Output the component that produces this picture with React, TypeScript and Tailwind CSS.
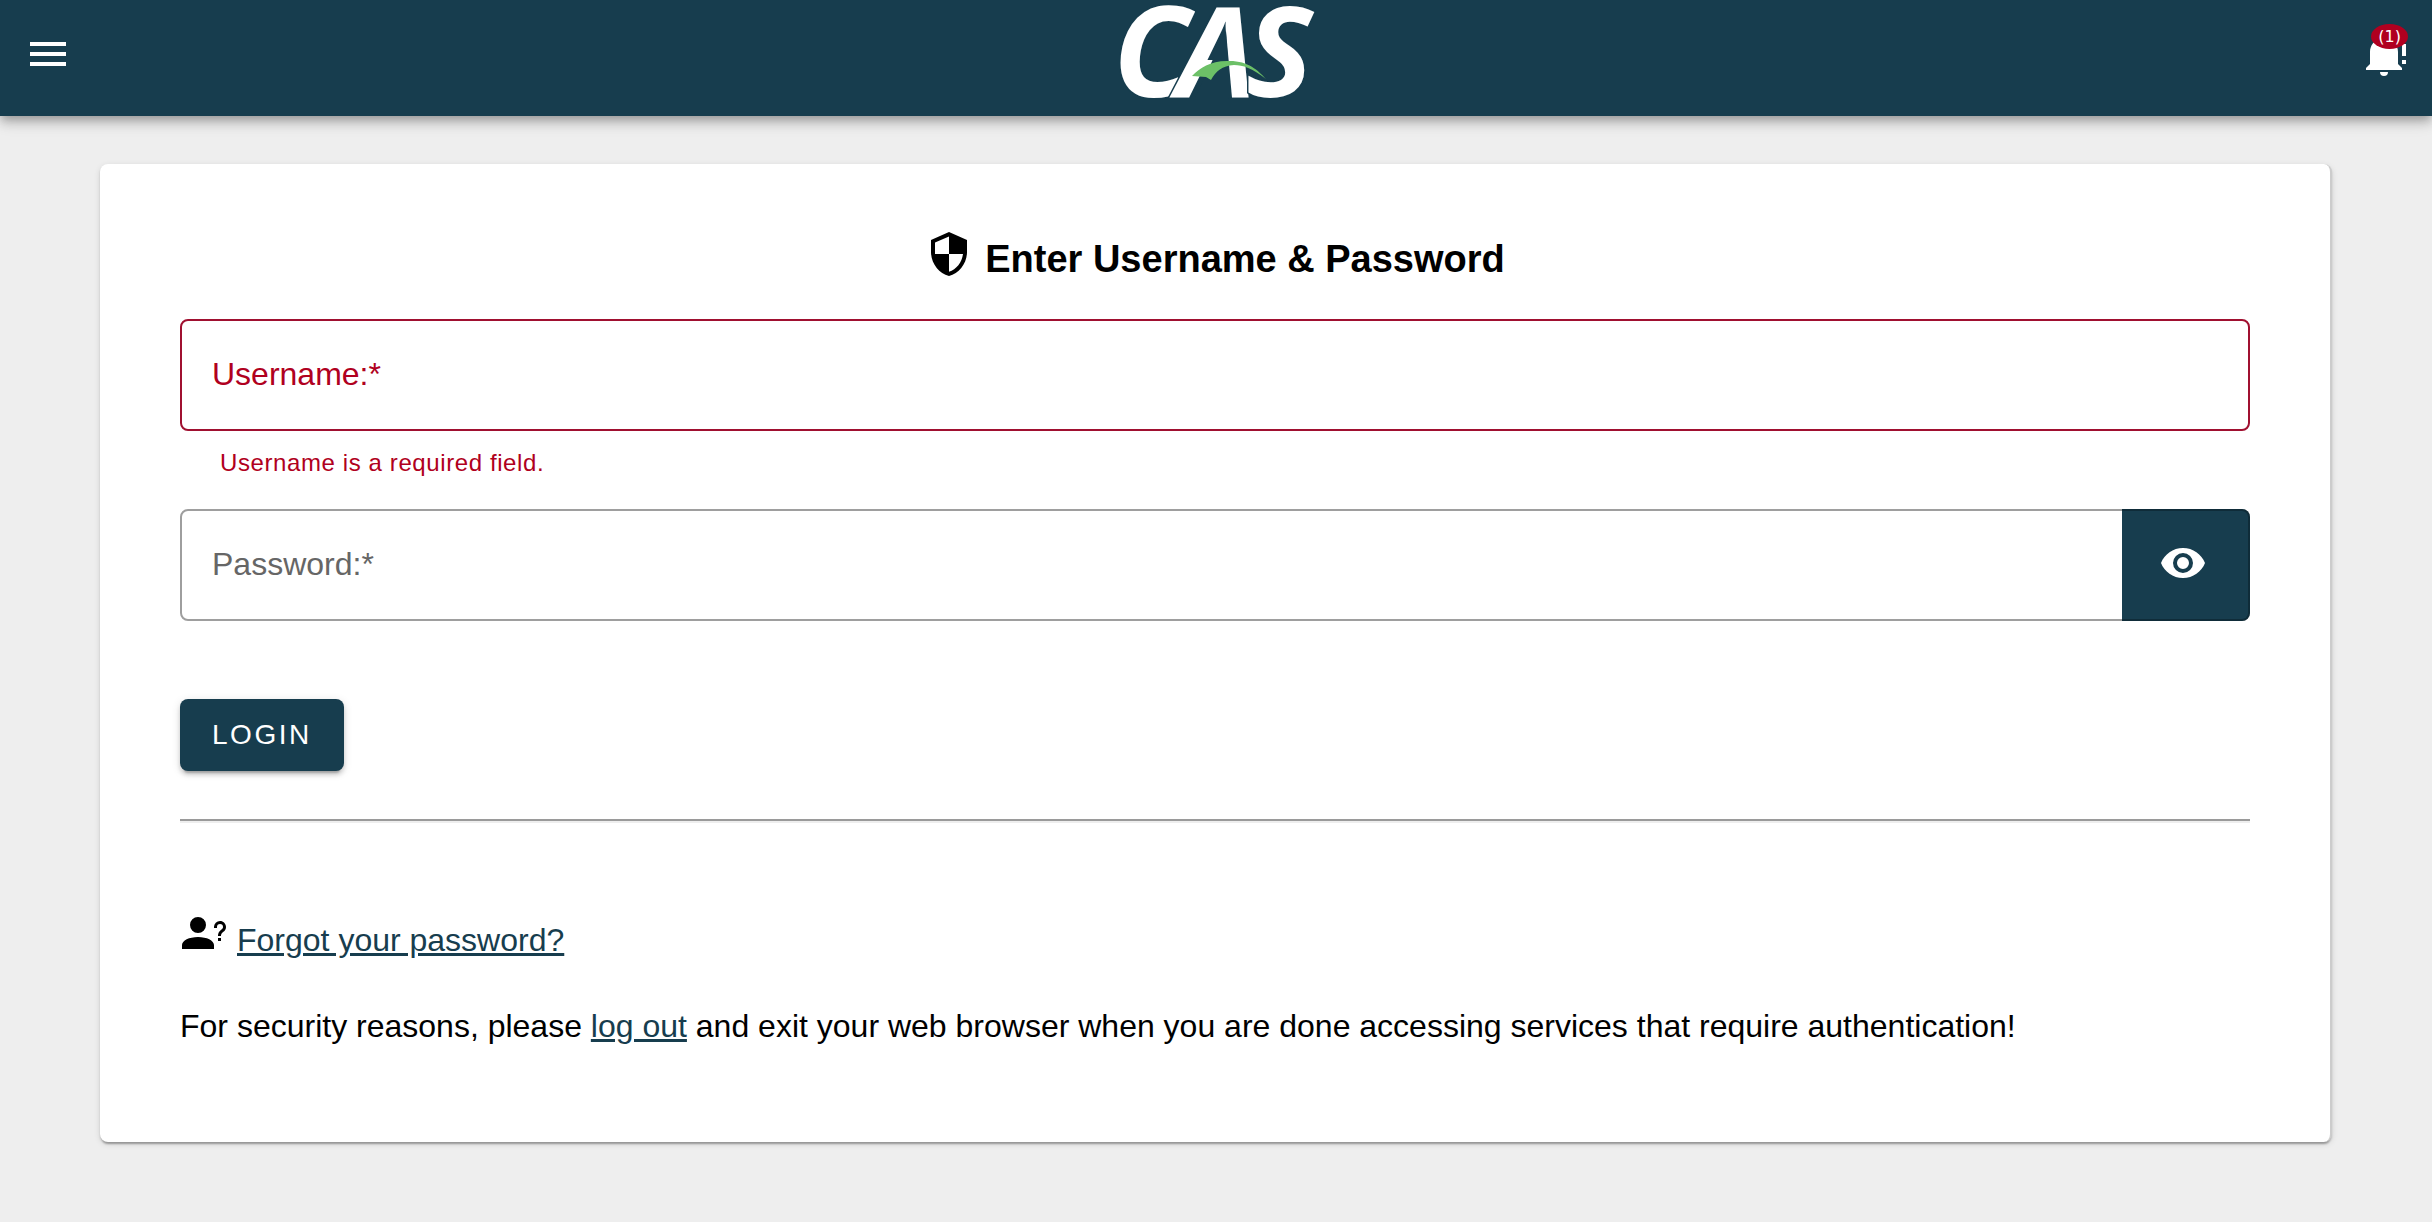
import { useState } from "react";
import type { ReactNode } from "react";

function Icon({ path, className }: { path: string; className?: string }) {
  return (
    <svg viewBox="0 0 24 24" aria-hidden="true" className={`size-12 shrink-0 fill-current ${className ?? ""}`}>
      <path d={path} />
    </svg>
  );
}

const icons = {
  menu: "M3,6H21V8H3V6M3,11H21V13H3V11M3,16H21V18H3V16Z",
  bell: "M23,7V13H21V7M21,15H23V17H21M12,2A2,2 0 0,0 10,4A2,2 0 0,0 10,4.29C7.12,5.14 5,7.82 5,11V17L3,19V20H21V19L19,17V11C19,7.82 16.88,5.14 14,4.29A2,2 0 0,0 14,4A2,2 0 0,0 12,2M10,21A2,2 0 0,0 12,23A2,2 0 0,0 14,21H10Z",
  shield:
    "M12,12H19C18.47,16.11 15.72,19.78 12,20.92V12H5V6.3L12,3.19M12,1L3,5V11C3,16.55 6.84,21.73 12,23C17.16,21.73 21,16.55 21,11V5L12,1Z",
  eye: "M12,9A3,3 0 0,0 9,12A3,3 0 0,0 12,15A3,3 0 0,0 15,12A3,3 0 0,0 12,9M12,17A5,5 0 0,1 7,12A5,5 0 0,1 12,7A5,5 0 0,1 17,12A5,5 0 0,1 12,17M12,4.5C7,4.5 2.73,7.61 1,12C2.73,16.39 7,19.5 12,19.5C17,19.5 21.27,16.39 23,12C21.27,7.61 17,4.5 12,4.5Z",
  account:
    "M13,8A4,4 0 0,1 9,12A4,4 0 0,1 5,8A4,4 0 0,1 9,4A4,4 0 0,1 13,8M17,18V20H1V18C1,15.79 4.58,14 9,14C13.42,14 17,15.79 17,18M20.5,14.5V16H19V14.5H20.5M18.5,9.5H17V9A3,3 0 0,1 20,6C21.66,6 23,7.34 23,9C23,9.97 22.5,10.88 21.71,11.41L21.41,11.6C20.84,12 20.5,12.61 20.5,13.3V13.5H19V13.3C19,12.11 19.6,11 20.59,10.35L20.88,10.16C21.27,9.9 21.5,9.47 21.5,9A1.5,1.5 0 0,0 20,7.5A1.5,1.5 0 0,0 18.5,9V9.5Z",
};

function Logo() {
  return (
    <svg viewBox="0 0 192 116" role="img" aria-label="CAS" className="h-[116px] w-48 overflow-visible">
      <text
        x="-7 57 126"
        y="97"
        fill="#fff"
        stroke="#173d4e"
        strokeWidth="3"
        paintOrder="stroke"
        fontFamily="'Open Sans', sans-serif"
        fontSize="126"
        fontWeight="700"
        fontStyle="italic"
      >
        CAS
      </text>
      {/* open leg space of the A, crossed by the green swoosh */}
      <path fill="#173d4e" d="M106 31L112 98H75Z" />
      <path fill="#6cc067" d="M72 76C80 68 90 61 107 61C127 60 138 70 146 79C132 68 123 65 114 65C102 66 96 71 91 80L86 77Z" />
    </svg>
  );
}

function Header() {
  return (
    <header className="relative flex h-[116px] items-start justify-between bg-[#173d4e] px-6 text-white shadow-[0_4px_8px_-2px_rgba(0,0,0,0.2),0_8px_10px_0_rgba(0,0,0,0.14),0_2px_20px_0_rgba(0,0,0,0.12)]">
      <button type="button" aria-label="Menu" className="mt-[30px]">
        <Icon path={icons.menu} />
      </button>
      <Logo />
      <button type="button" aria-label="Notifications" className="relative mt-[30px]">
        <Icon path={icons.bell} />
        <span className="absolute -top-1.5 right-0 rounded-[50%] bg-[#b00020] px-[7px] pt-px font-['DejaVu_Sans',sans-serif] text-[16px] leading-6">
          (1)
        </span>
      </button>
    </header>
  );
}

type FieldProps = {
  id: string;
  label: string;
  type: string;
  invalid?: boolean;
  children?: ReactNode;
};

function Field({ id, label, type, invalid, children }: FieldProps) {
  const [value, setValue] = useState("");
  return (
    <div className={`relative flex h-28 rounded-lg border-2 ${invalid ? "border-[#a01030]" : "border-[#9e9e9e]"}`}>
      <input
        id={id}
        type={type}
        required
        aria-invalid={invalid}
        value={value}
        onChange={(e) => setValue(e.target.value)}
        className="min-w-0 flex-1 rounded-lg bg-transparent px-8 text-[32px] outline-none"
      />
      {value === "" && (
        <label
          htmlFor={id}
          className={`pointer-events-none absolute inset-y-0 left-[30px] flex items-center pb-0.5 text-[32px] leading-10 ${invalid ? "text-[#b00020]" : "text-[#666]"}`}
        >
          {label}
        </label>
      )}
      {children}
    </div>
  );
}

export default function App() {
  const [visible, setVisible] = useState(false);
  return (
    <div className="min-h-screen bg-[#eee] font-['Liberation_Sans',Arial,sans-serif] text-[32px] text-black">
      <Header />
      <main className="mx-[100px] mt-12 rounded-lg border-r-2 border-[#ccc] bg-white px-20 pt-[66px] pb-24 shadow-[0_4px_2px_-2px_rgba(0,0,0,0.2),0_2px_2px_0_rgba(0,0,0,0.14),0_2px_6px_0_rgba(0,0,0,0.12)]">
        <form onSubmit={(e) => e.preventDefault()}>
          <h1 className="flex items-start justify-center gap-3 text-[38px] leading-[58px] font-bold">
            <Icon path={icons.shield} />
            Enter Username &amp; Password
          </h1>
          <div className="mt-[31px]">
            <Field id="username" label="Username:*" type="text" invalid />
            <p className="mt-4 pl-10 text-[24px] leading-8 tracking-wide text-[#b00020]">Username is a required field.</p>
          </div>
          <div className="mt-[30px]">
            <Field id="password" label="Password:*" type={visible ? "text" : "password"}>
              <button
                type="button"
                aria-label="Toggle password"
                onClick={() => setVisible(!visible)}
                className="-my-0.5 -mr-0.5 flex w-32 items-center justify-center rounded-r-lg border-y-2 border-r-2 border-[#0f2c39] bg-[#173d4e] pr-1 pb-1 text-white"
              >
                <Icon path={icons.eye} />
              </button>
            </Field>
          </div>
          <button
            type="submit"
            className="mt-[78px] block h-[72px] rounded-lg bg-[#173d4e] px-8 text-[28px] tracking-[0.09em] text-white shadow-[0_6px_2px_-4px_rgba(0,0,0,0.2),0_4px_4px_0_rgba(0,0,0,0.14),0_2px_10px_0_rgba(0,0,0,0.12)]"
          >
            LOGIN
          </button>
        </form>
        <hr className="mt-12 border-t-2 border-b-2 border-t-[#9a9a9a] border-b-[#eee]" />
        <div className="mt-[86px] flex items-start gap-[9px]">
          <Icon path={icons.account} />
          <a href="#forgot" className="mt-[11px] leading-10 text-[#173d4e] underline">
            Forgot your password?
          </a>
        </div>
        <p className="mt-[46px] leading-10">
          For security reasons, please{" "}
          <a href="#logout" className="text-[#173d4e] underline">
            log out
          </a>{" "}
          and exit your web browser when you are done accessing services that require authentication!
        </p>
      </main>
    </div>
  );
}
